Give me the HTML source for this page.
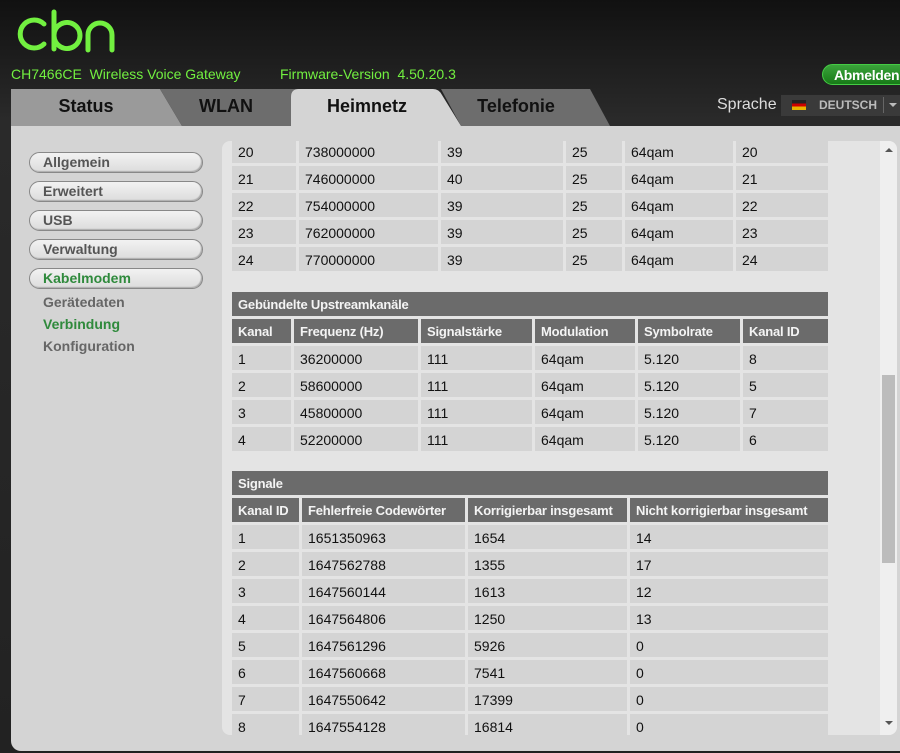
<!DOCTYPE html>
<html><head><meta charset="utf-8"><style>
*{margin:0;padding:0;box-sizing:border-box}
body{width:900px;height:753px;overflow:hidden;background:linear-gradient(#111,#2a2a2a 120px,#222);font-family:"Liberation Sans",Arial,sans-serif;position:relative}
.a{position:absolute}
.g{color:#72f040}
.tab{font-weight:bold;font-size:18px;color:#111;text-align:center}
.nav{position:absolute;left:29px;width:174px;height:21px;border:1px solid #888;border-radius:11px;background:linear-gradient(#f2f2f2,#dcdcdc);box-shadow:inset -1px -1px 1px #aaa;font-weight:bold;font-size:14px;color:#555;padding:1px 0 0 13px}
.sub{position:absolute;left:43px;font-weight:bold;font-size:14px;color:#666}
.cell{position:absolute;background:#d4d4d4;font-size:14px;color:#111;padding:5px 0 0 6px;height:24px;white-space:nowrap}
.hd{position:absolute;background:#6b6b6b;color:#f4f4f4;font-weight:bold;font-size:13px;padding:5px 0 0 6px;height:24px;white-space:nowrap;overflow:hidden;letter-spacing:-0.2px}
</style></head><body>
<svg class="a" style="left:12px;top:9px" width="110" height="44" viewBox="0 0 110 44">
<g fill="none" stroke="#72f040" stroke-width="5" stroke-linecap="round">
<path d="M32 15 A14 14 0 1 0 32 35"/>
<path d="M42 3 V40 M42 26 A13 13 0 1 1 42 27"/>
<path d="M76 41 V26 A12 12 0 0 1 100 26 V41"/>
</g></svg>
<div class="a g" style="left:11px;top:66px;font-size:14px">CH7466CE&nbsp; Wireless Voice Gateway</div>
<div class="a g" style="left:280px;top:66px;font-size:14px">Firmware-Version&nbsp; 4.50.20.3</div>
<div class="a" style="left:822px;top:64px;width:90px;height:21px;border-radius:11px;background:linear-gradient(#3ba33b,#177a17);border:1px solid #4c4;color:#fff;font-weight:bold;font-size:14px;padding:2px 0 0 11px;letter-spacing:-0.3px">Abmelden</div>
<svg class="a" style="left:0;top:89px" width="620" height="38">
<polygon points="11,0 160,0 182,37 11,37" fill="#9a9a9a"/>
<polygon points="160,0 300,0 300,37 182,37" fill="#6d6d6d"/>
<polygon points="441,0 590,0 610,37 461,37" fill="#6d6d6d"/>
<path d="M291 37 V8 Q291 0 299 0 H433 Q439 0 442 6 L461 37 Z" fill="#d4d4d4"/>
</svg>
<div class="a tab" style="left:30px;top:96px;width:112px">Status</div>
<div class="a tab" style="left:170px;top:96px;width:112px">WLAN</div>
<div class="a tab" style="left:311px;top:96px;width:112px">Heimnetz</div>
<div class="a tab" style="left:460px;top:96px;width:112px">Telefonie</div>
<div class="a" style="left:717px;top:96px;color:#ddd;font-size:16px">Sprache</div>
<div class="a" style="left:781px;top:95px;width:119px;height:21px;background:#3a3a3a;color:#bbb;font-size:12px;font-weight:bold;padding:3px 0 0 38px">DEUTSCH</div>
<div class="a" style="left:792px;top:100px;width:14px;height:10px;background:linear-gradient(#222 33%,#c00 33%,#c00 66%,#e8b400 66%)"></div>
<div class="a" style="left:883px;top:97px;width:1px;height:16px;background:#666"></div>
<div class="a" style="left:889px;top:103px;border:4px solid transparent;border-top-color:#bbb"></div>
<div class="a" style="left:11px;top:126px;width:889px;height:625px;background:#d4d4d4;border-radius:0 0 0 10px"></div>
<div class="nav" style="top:152px">Allgemein</div>
<div class="nav" style="top:181px">Erweitert</div>
<div class="nav" style="top:210px">USB</div>
<div class="nav" style="top:239px">Verwaltung</div>
<div class="nav" style="top:268px;color:#2f8a3c">Kabelmodem</div>
<div class="sub" style="top:294px">Gerätedaten</div>
<div class="sub" style="top:316px;color:#2f8a3c">Verbindung</div>
<div class="sub" style="top:338px">Konfiguration</div>
<div class="a" style="left:222px;top:141px;width:675px;height:594px;background:#e4e4e4;border-radius:8px;overflow:hidden" id="p">
<div class="a" style="left:658px;top:0;width:17px;height:594px;background:#efefef"></div>
<div class="a" style="left:660px;top:234px;width:13px;height:188px;background:#bcbcbc"></div>
<div class="a" style="left:663px;top:7px;border:4px solid transparent;border-bottom-color:#555;border-top:0"></div>
<div class="a" style="left:663px;top:580px;border:4px solid transparent;border-top-color:#555;border-bottom:0"></div>
</div>
<script>
var p=document.getElementById('p');
function row(y,cols,vals,cls){for(var i=0;i<vals.length;i++){var d=document.createElement('div');d.className=cls;d.style.left=(cols[i][0]-222)+'px';d.style.top=(y-141)+'px';d.style.width=(cols[i][1]-cols[i][0])+'px';d.textContent=vals[i];p.insertBefore(d,p.children[0]);}}
var c1=[[232,296],[299,438],[441,563],[566,622],[625,733],[736,828]];
var f=['738000000','746000000','754000000','762000000','770000000'],s=['39','40','39','39','39'];
for(var i=0;i<5;i++)row(141+i*27-2,c1,[20+i+'',f[i],s[i],'25','64qam',20+i+''],'cell');
var c2=[[232,291],[294,418],[421,532],[535,635],[638,740],[743,828]];
row(292,[[232,828]],['Gebündelte Upstreamkanäle'],'hd');
row(319,c2,['Kanal','Frequenz (Hz)','Signalstärke','Modulation','Symbolrate','Kanal ID'],'hd');
var uf=['36200000','58600000','45800000','52200000'],ui=['8','5','7','6'];
for(i=0;i<4;i++)row(346+i*27,c2,[i+1+'',uf[i],'111','64qam','5.120',ui[i]],'cell');
var c3=[[232,299],[302,465],[468,627],[630,828]];
row(471,[[232,828]],['Signale'],'hd');
row(498,c3,['Kanal ID','Fehlerfreie Codewörter','Korrigierbar insgesamt','Nicht korrigierbar insgesamt'],'hd');
var a=['1651350963','1647562788','1647560144','1647564806','1647561296','1647560668','1647550642','1647554128'],b=['1654','1355','1613','1250','5926','7541','17399','16814'],cc=['14','17','12','13','0','0','0','0'];
for(i=0;i<8;i++)row(525+i*27,c3,[i+1+'',a[i],b[i],cc[i]],'cell');
</script>
</body></html>
